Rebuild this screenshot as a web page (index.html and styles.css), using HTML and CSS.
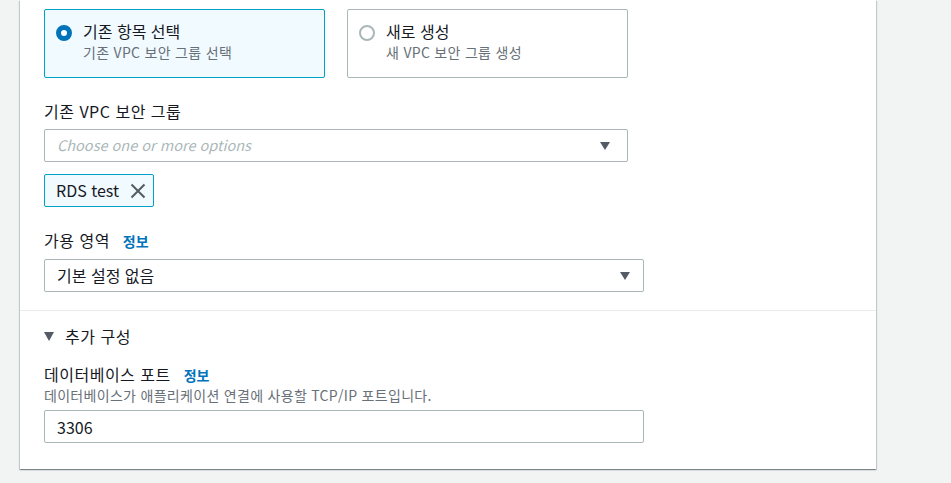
FILE: index.html
```html
<!DOCTYPE html>
<html lang="ko">
<head>
<meta charset="utf-8">
<link rel="stylesheet" href="styles.css">
</head>
<body>
<div class="page">
  <div class="card">
    <div class="section">
      <div class="tiles">
        <div class="tile tile-selected">
          <span class="radio radio-on"></span>
          <div class="tile-text">
            <div class="tile-title">기존 항목 선택</div>
            <div class="tile-desc">기존 VPC 보안 그룹 선택</div>
          </div>
        </div>
        <div class="tile">
          <span class="radio"></span>
          <div class="tile-text">
            <div class="tile-title">새로 생성</div>
            <div class="tile-desc">새 VPC 보안 그룹 생성</div>
          </div>
        </div>
      </div>

      <div class="label label-first">기존 VPC 보안 그룹</div>
      <div class="select select-narrow">
        <span class="placeholder">Choose one or more options</span>
        <span class="caret"></span>
      </div>
      <div class="tag">
        <span class="tag-text">RDS test</span>
        <svg class="tag-x" width="16" height="16" viewBox="0 0 16 16"><path d="M1.5 1.5 L14.5 14.5 M14.5 1.5 L1.5 14.5" stroke="#545b64" stroke-width="2" fill="none"/></svg>
      </div>

      <div class="label label-second">가용 영역 <a class="info">정보</a></div>
      <div class="select select-wide">
        <span class="value">기본 설정 없음</span>
        <span class="caret"></span>
      </div>
    </div>

    <div class="section section-more">
      <div class="expander"><span class="exp-caret"></span><span class="exp-text">추가 구성</span></div>
      <div class="label label-port">데이터베이스 포트 <a class="info">정보</a></div>
      <div class="desc">데이터베이스가 애플리케이션 연결에 사용할 TCP/IP 포트입니다.</div>
      <div class="input">3306</div>
    </div>
  </div>
</div>
</body>
</html>
```

FILE: styles.css
```css
html, body {
  margin: 0;
  padding: 0;
}
body {
  background: #f2f3f3;
  font-family: "Noto Sans CJK KR", sans-serif;
  color: #16191f;
  width: 951px;
  height: 483px;
  overflow: hidden;
}
.page {
  padding-left: 20px;
}
.card {
  width: 856px;
  background: #fff;
  box-shadow: 0 1px 1px 0 rgba(0,28,36,.3), 1px 1px 1px 0 rgba(0,28,36,.15), -1px 1px 1px 0 rgba(0,28,36,.15);
}
.section {
  padding: 9px 24px 18px;
}
.section-more {
  border-top: 1px solid #eaeded;
  padding: 14px 24px 26px;
}
.tiles {
  display: flex;
  gap: 22px;
  width: 584px;
}
.tile {
  box-sizing: border-box;
  width: 281px;
  height: 69px;
  border: 1px solid #aab7b8;
  border-radius: 2px;
  padding: 10px 11px 0;
  display: flex;
  gap: 11px;
}
.tile-selected {
  border-color: #00a1c9;
  background: #f1faff;
}
.radio {
  box-sizing: border-box;
  flex: none;
  width: 16px;
  height: 16px;
  margin-top: 5px;
  border-radius: 50%;
  border: 2px solid #aab7b8;
  background: #fff;
}
.radio-on {
  border: 5px solid #0073bb;
}
.tile-title {
  font-size: 16px;
  line-height: 22px;
  color: #16191f;
}
.tile-desc {
  font-size: 14px;
  line-height: 21px;
  letter-spacing: 0.3px;
  color: #687078;
}
.label {
  font-size: 16px;
  line-height: 22px;
  letter-spacing: 0.5px;
  color: #16191f;
}
.label-first {
  margin-top: 22px;
  margin-bottom: 7px;
}
.label-second {
  margin-top: 22px;
  margin-bottom: 8px;
}
.info {
  font-size: 14px;
  line-height: 14px;
  font-weight: 700;
  letter-spacing: 0;
  color: #0073bb;
  margin-left: 8px;
}
.select {
  box-sizing: border-box;
  height: 33px;
  border: 1px solid #aab7b8;
  border-radius: 2px;
  display: flex;
  align-items: center;
  justify-content: space-between;
  padding: 0 17px 0 12px;
  background: #fff;
}
.select-narrow {
  width: 584px;
}
.select-wide {
  width: 600px;
  padding-right: 13px;
}
.placeholder {
  font-size: 14.5px;
  line-height: 20px;
  margin-top: -2px;
  font-style: italic;
  color: #aab7b8;
}
.value {
  font-size: 16px;
  line-height: 20px;
  margin-top: -1px;
  color: #16191f;
}
.caret {
  width: 0;
  height: 0;
  border-left: 5.5px solid transparent;
  border-right: 5.5px solid transparent;
  border-top: 8px solid #545b64;
}
.tag {
  box-sizing: border-box;
  margin-top: 12px;
  height: 33px;
  width: 110px;
  border: 1px solid #00a1c9;
  background: #f1faff;
  border-radius: 2px;
  display: flex;
  align-items: center;
  padding: 0 7px 0 11px;
  justify-content: space-between;
}
.tag-text {
  font-size: 16px;
  line-height: 20px;
  margin-top: -1px;
}
.tag-x {
  display: block;
}
.expander {
  display: flex;
  align-items: center;
  height: 22px;
  font-size: 16px;
  line-height: 22px;
  color: #16191f;
}
.exp-caret {
  width: 0;
  height: 0;
  border-left: 5.5px solid transparent;
  border-right: 5.5px solid transparent;
  border-top: 9px solid #545b64;
  margin-right: 11px;
}
.exp-text {
  letter-spacing: 0.5px;
}
.label-port {
  margin-top: 16px;
}
.desc {
  font-size: 14px;
  line-height: 18px;
  letter-spacing: 0.3px;
  color: #687078;
  margin-top: 1px;
}
.input {
  box-sizing: border-box;
  margin-top: 6px;
  width: 600px;
  height: 33px;
  border: 1px solid #aab7b8;
  border-radius: 2px;
  padding: 0 12px;
  display: flex;
  align-items: center;
  font-size: 16px;
}
```
